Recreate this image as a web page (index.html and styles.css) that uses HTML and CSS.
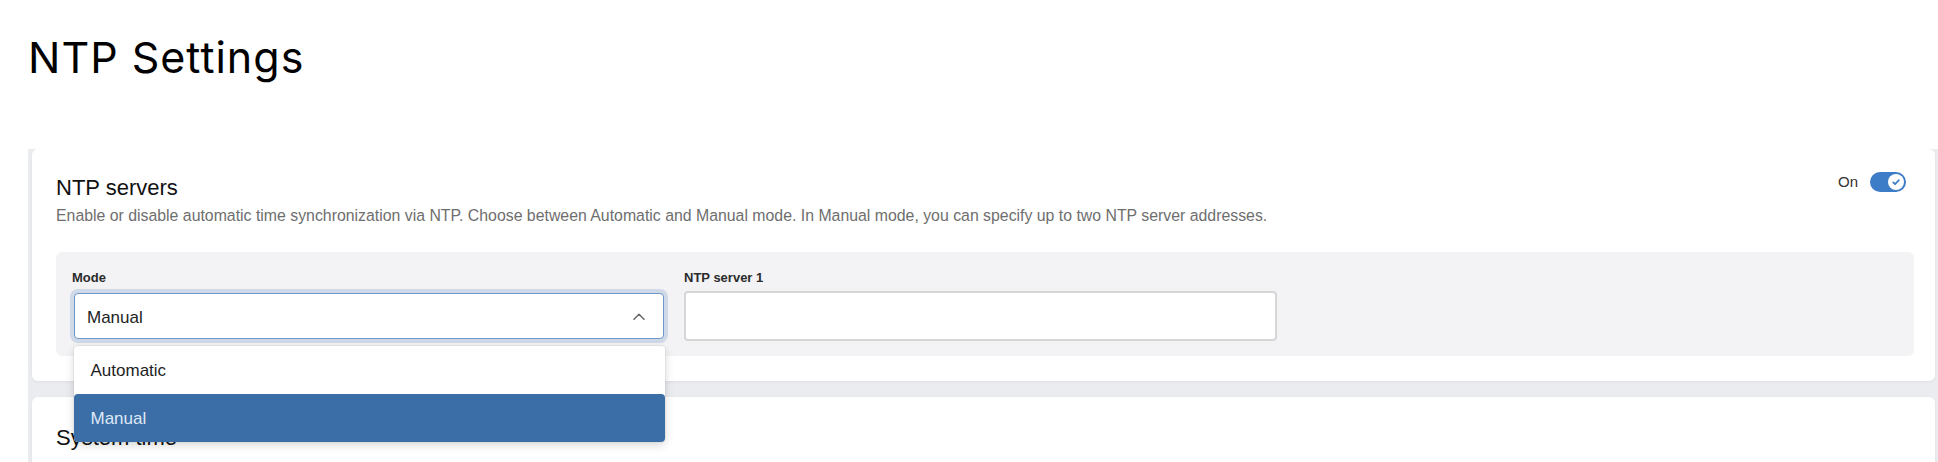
FILE: index.html
```html
<!DOCTYPE html>
<html lang="en">
<head>
<meta charset="utf-8">
<title>NTP Settings</title>
<link rel="stylesheet" href="styles.css">
</head>
<body>
<main class="page">
  <h1 class="page-title">NTP Settings</h1>
  <div class="sections">
    <section class="card">
      <div class="card-header">
        <div class="card-heading">
          <h2 class="card-title">NTP servers</h2>
          <p class="card-desc">Enable or disable automatic time synchronization via NTP. Choose between Automatic and Manual mode. In Manual mode, you can specify up to two NTP server addresses.</p>
        </div>
        <div class="switch-group">
          <span class="switch-label">On</span>
          <span class="switch">
            <span class="knob">
              <svg width="16" height="16" viewBox="0 0 16 16"><path d="M5.2 8.3 L7.1 10.1 L10.9 6.2" fill="none" stroke="#3d7cc6" stroke-width="1.7" stroke-linecap="round" stroke-linejoin="round"/></svg>
            </span>
          </span>
        </div>
      </div>
      <div class="fields">
        <div class="field">
          <span class="field-label">Mode</span>
          <div class="select">
            <span class="select-value">Manual</span>
            <svg class="chevron" width="12" height="7" viewBox="0 0 12 7"><path d="M1 6.2 L6 1.2 L11 6.2" fill="none" stroke="#666" stroke-width="1.5" stroke-linecap="round" stroke-linejoin="round"/></svg>
            <ul class="menu">
              <li class="menu-item">Automatic</li>
              <li class="menu-item menu-item-selected">Manual</li>
            </ul>
          </div>
        </div>
        <div class="field">
          <span class="field-label">NTP server 1</span>
          <input class="text-input" type="text">
        </div>
      </div>
    </section>
    <section class="card card-next">
      <h2 class="card-title">System time</h2>
    </section>
  </div>
</main>
</body>
</html>
```

FILE: styles.css
```css
html, body {
  margin: 0;
  padding: 0;
  overflow: hidden;
  background: #ffffff;
}

body {
  font-family: "Liberation Sans", Arial, sans-serif;
  color: #111;
}

.page {
  padding: 32px 0 0 28px;
}

.page-title {
  margin: 0 0 67px 0;
  font-family: "Inter", "Liberation Sans", sans-serif;
  font-size: 43px;
  font-weight: 400;
  line-height: 50px;
  letter-spacing: 1px;
  color: #000;
}

.sections {
  background: #eaecf0;
  padding: 0 3px 40px 4px;
  display: flex;
  flex-direction: column;
  gap: 16px;
}

.card {
  background: #fff;
  border-radius: 6px;
  box-shadow: 0 1px 3px rgba(0, 0, 0, 0.06);
  padding: 23px 21px 25px 24px;
}

.card-header {
  display: flex;
  justify-content: space-between;
  align-items: flex-start;
}

.card-title {
  margin: 3px 0 0 0;
  font-size: 22px;
  font-weight: 400;
  line-height: 26px;
  color: #111;
}

.card-desc {
  margin: 5px 0 0 0;
  font-size: 15.85px;
  line-height: 20px;
  color: #6e6e6e;
}

.switch-group {
  display: flex;
  align-items: center;
  gap: 12px;
  height: 20px;
  margin-right: 8px;
}

.switch-label {
  font-size: 15px;
  line-height: 20px;
  color: #333;
}

.switch {
  width: 36px;
  height: 20px;
  border-radius: 10px;
  background: #3d7cc6;
  display: flex;
  align-items: center;
  justify-content: flex-end;
  padding: 0 2px;
  box-sizing: border-box;
}

.knob {
  width: 16px;
  height: 16px;
  border-radius: 50%;
  background: #fff;
  display: flex;
}

.fields {
  margin-top: 26px;
  background: #f3f3f5;
  border-radius: 6px;
  padding: 18px 16px 15px 16px;
  display: grid;
  grid-template-columns: 594px 593px;
  column-gap: 18px;
  align-items: start;
}

.field {
  display: flex;
  flex-direction: column;
}

.field-label {
  font-size: 13px;
  font-weight: 700;
  line-height: 16px;
  color: #2b2b2b;
  margin-bottom: 5px;
}

.select {
  position: relative;
  margin: 2px 2px 0 2px;
  height: 46px;
  box-sizing: border-box;
  background: #fff;
  border: 1.5px solid #6f97c8;
  border-radius: 4px;
  box-shadow: 0 0 0 4px #d0d9e7;
  display: flex;
  align-items: center;
  justify-content: space-between;
  padding: 3px 18px 0 12px;
}

.select-value {
  font-size: 17px;
  line-height: 20px;
  color: #1e1e1e;
}

.chevron {
  display: block;
  margin-top: -3px;
}

.menu {
  position: absolute;
  top: calc(100% + 8px);
  left: -1.5px;
  right: -1.5px;
  margin: 0;
  padding: 0;
  list-style: none;
  background: #fff;
  border-radius: 4px;
  box-shadow: 0 3px 10px rgba(0, 0, 0, 0.16), 0 0 0 1px rgba(0, 0, 0, 0.04);
  z-index: 10;
}

.menu-item {
  height: 48px;
  line-height: 50px;
  padding-left: 17px;
  font-size: 17px;
  color: #1e1e1e;
}

.menu-item-selected {
  background: #3b6ea7;
  color: #dfe9f6;
  border-radius: 4px;
}

.text-input {
  height: 50px;
  box-sizing: border-box;
  border: 2px solid #d6d6d6;
  border-radius: 4px;
  background: #fff;
  font-family: inherit;
  font-size: 17px;
  padding: 0 12px;
  outline: none;
}

.card-next {
  padding-top: 28px;
  min-height: 120px;
}

.card-next .card-title {
  margin-top: 0;
}
```
